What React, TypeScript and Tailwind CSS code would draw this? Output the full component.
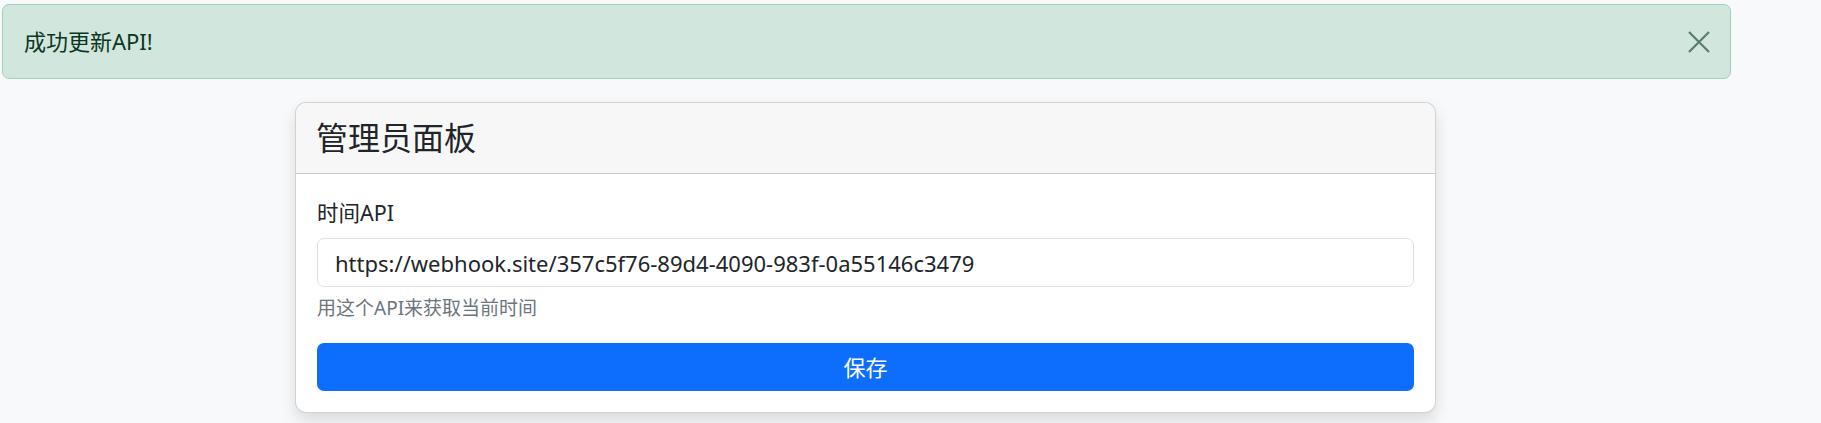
import { useState } from "react";

const font = "font-['Noto_Sans','Noto_Sans_CJK_SC',sans-serif]";

const App = () => {
  const [url, setUrl] = useState("https://webhook.site/357c5f76-89d4-4090-983f-0a55146c3479");

  return (
    <div className={`min-h-[423px] bg-[#f8f9fa] text-[#212529] ${font}`}>
      <div className="w-[1731px] pt-[4px]">
        {/* alert */}
        <div className="ml-[2px] flex h-[75px] items-center justify-between rounded-[7px] border border-[#a3cfbb] bg-[#d1e7dd] pl-[21px] pr-[20px] text-[#0a3622]">
          <span className="text-[22px]">成功更新API!</span>
          <button className="flex h-[22px] w-[22px] items-center justify-center text-[#0a3622] opacity-60">
            <svg width="22" height="22" viewBox="0 0 22 22" fill="none" stroke="currentColor" strokeWidth="2.2">
              <path d="M1 1L21 21M21 1L1 21" />
            </svg>
          </button>
        </div>

        {/* card */}
        <div className="mx-auto mt-[23px] w-[1141px] overflow-hidden rounded-[11px] border border-black/[0.175] bg-white shadow-[0_0.5rem_1rem_rgba(0,0,0,0.12)]">
          <div className="flex h-[71px] items-center border-b border-black/[0.175] bg-[#f7f7f7] px-[20px]">
            <h3 className="text-[32px] leading-none">管理员面板</h3>
          </div>
          <div className="px-[21px] pb-[21px] pt-[25px]">
            <label className="block text-[21.5px] leading-[28px]">时间API</label>
            <input
              value={url}
              onChange={(e) => setUrl(e.target.value)}
              className="mt-[11px] block h-[49px] w-full rounded-[7px] border border-[#dee2e6] px-[17px] text-[22px] text-[#212529] outline-none"
            />
            <p className="mt-[9px] text-[19px] leading-[24px] text-[#6c757d]">用这个API来获取当前时间</p>
            <button className="mt-[23px] block h-[48px] w-full rounded-[7px] bg-[#0d6efd] text-[22px] text-white">保存</button>
          </div>
        </div>
      </div>
    </div>
  );
};

export default App;
